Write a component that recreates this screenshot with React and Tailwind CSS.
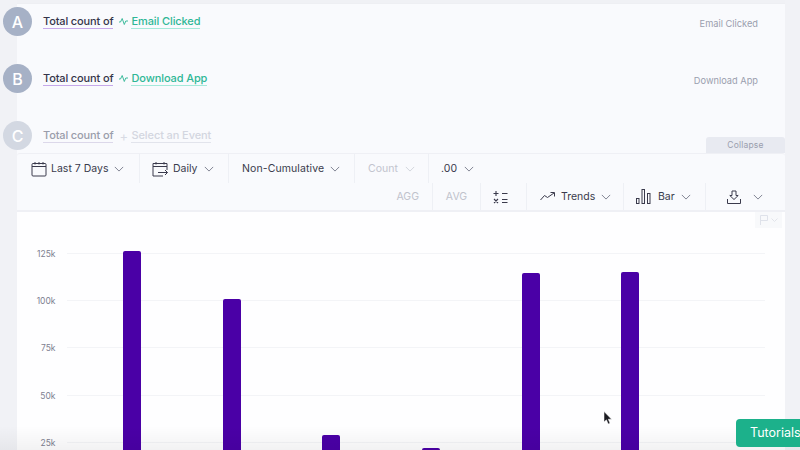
import React from "react";

const Chev = ({ className = "" }) => (
  <svg width="10" height="6" viewBox="0 0 12 7" fill="none" stroke="currentColor" strokeWidth="1.1" className={className}>
    <path d="M1 1l5 5 5-5" />
  </svg>
);

const Pulse = ({ className = "" }) => (
  <svg width="9" height="9" viewBox="0 0 9 9" fill="none" stroke="currentColor" strokeWidth="1" className={className}>
    <path d="M0 5h1.5L3.2 1.5 5.3 7.5 6.8 4H9" />
  </svg>
);

function QueryRow({ letter, event, right, dim }) {
  return (
    <div className="flex h-[57px] items-center -ml-[14px]">
      <div className={`w-[29px] h-[29px] shrink-0 rounded-full flex items-center justify-center text-white text-[16px] font-medium ${dim ? "bg-[#d3d8e2]" : "bg-[#a6b1c6]"}`}>
        {letter}
      </div>
      <span className={`ml-[11px] text-[11px] font-medium tracking-[-0.14px] leading-[14px] border-b ${dim ? "text-[#9a9dab] border-[#dcd8ea]" : "text-[#35354a] border-[#c6a8ea]"}`}>
        Total count of
      </span>
      {dim ? (
        <span className="ml-[6px] mr-[3px] w-[9px] text-[#d8dbe4] text-[13px] leading-[14px]">+</span>
      ) : (
        <Pulse className="ml-[6px] mr-[3px] text-[#3dbb9c]" />
      )}
      <span className={`text-[11px] font-medium tracking-[-0.1px] leading-[14px] border-b ${dim ? "text-[#d3d6e0] border-[#e2e4ec]" : "text-[#2fb796] border-[#a5e9da]"}`}>
        {event}
      </span>
      {right && (
        <span className="ml-auto text-[9.25px] text-[#9a9eae] mt-[5px] mr-[27px]">{right}</span>
      )}
    </div>
  );
}

const Div = ({ className = "" }) => <div className={`w-px self-stretch bg-[#eef0f5] ${className}`} />;

const Calendar = () => (
  <svg width="16" height="16" viewBox="0 0 16 16" fill="none" stroke="#3a3a4c" strokeWidth="1">
    <rect x="1" y="2.5" width="14" height="12.5" rx="1" />
    <path d="M1 5.5h14M4 1v2.5M8 1v2.5M12 1v2.5" />
  </svg>
);

const CalendarArrow = () => (
  <svg width="16" height="16" viewBox="0 0 16 16" fill="none" stroke="#3a3a4c" strokeWidth="1">
    <path d="M15 9V2.5H1V15h10M1 5.5h14M4 1v2.5M12 1v2.5M6 11.5h9.5M13 9l2.5 2.5L13 14" />
  </svg>
);

const Ops = () => (
  <svg width="15" height="14" viewBox="0 0 15 14" fill="none" stroke="#3a3a4c" strokeWidth="1.1">
    <path d="M0.5 3.5h5M3 1v5M9 3.5h5.5M1 9l4 4M5 9l-4 4M9 9.5h5.5M9 12.5h5.5" />
  </svg>
);

const TrendIcon = () => (
  <svg width="15" height="9" viewBox="0 0 15 9" fill="none" stroke="#3a3a4c" strokeWidth="1">
    <path d="M0.5 8L4.5 3.5 7.5 5.5 14 1M10.5 0.5H14.5V4.5" />
  </svg>
);

const BarIcon = () => (
  <svg width="15" height="15" viewBox="0 0 15 15" fill="none" stroke="#3a3a4c" strokeWidth="1">
    <rect x="0.5" y="9.5" width="2.5" height="5" />
    <rect x="6" y="0.5" width="2.5" height="14" />
    <rect x="11.5" y="4.5" width="2.5" height="10" />
  </svg>
);

const Download = () => (
  <svg width="14" height="14" viewBox="0 0 14 14" fill="none" stroke="#3a3a4c" strokeWidth="1">
    <path d="M5 1h4v4.5h2.2L7 9.5 2.8 5.5H5zM0.5 9v4.5h13V9" />
  </svg>
);

const Flag = () => (
  <svg width="8" height="10" viewBox="0 0 8 10" fill="none" stroke="#dfe2ea" strokeWidth="1">
    <path d="M0.5 10V0.5h7v5h-7" />
  </svg>
);

const Item = ({ children, className = "" }) => (
  <div className={`flex items-center text-[10.5px] text-[#3a3a4c] ${className}`}>{children}</div>
);

function Chart() {
  const grid = [
    [41, "125k"],
    [88, "100k"],
    [135, "75k"],
    [183, "50k"],
    [230, "25k"],
  ];
  const bars = [
    [106, 39],
    [206, 87],
    [305, 223],
    [405, 236],
    [505, 61],
    [604, 60],
  ];
  return (
    <svg width="768" height="238" viewBox="0 0 768 238" className="block">
      {grid.map(([y, t]) => (
        <g key={t}>
          <line x1="50" x2="748" y1={y + 0.5} y2={y + 0.5} stroke="#f3f4f7" />
          <text x="38.5" y={y + 4} textAnchor="end" fontSize="8.5" fill="#7d8090" fontFamily="Inter, sans-serif">
            {t}
          </text>
        </g>
      ))}
      {bars.map(([x, y]) => (
        <path key={x} d={`M${x} 240V${y + 2}a2 2 0 0 1 2-2h14a2 2 0 0 1 2 2V240z`} fill="#4a00a6" />
      ))}
    </svg>
  );
}

export default function App() {
  return (
    <div className="relative flex w-[800px] h-[450px] overflow-hidden bg-[#f0f1f5] font-['Inter',sans-serif]">
      <div className="w-[17px] shrink-0 bg-[#f1f2f6]" />
      <main className="w-[768px] shrink-0 flex flex-col bg-[#f9fafd] mt-[3px] border-t border-[#eeeff3]">
        <section className="relative h-[160px] -mt-[11px] shrink-0">
          <QueryRow letter="A" event="Email Clicked" right="Email Clicked" />
          <QueryRow letter="B" event="Download App" right="Download App" />
          <QueryRow letter="C" event="Select an Event" dim />
          <div className="absolute right-0 bottom-0 w-[79px] h-[16px] rounded-t-[3px] bg-[#e8eaf1] flex items-center justify-center text-[8.5px] tracking-[0.2px] text-[#9a9eae]">
            Collapse
          </div>
        </section>
        <section className="h-[59px] shrink-0 border-t border-b-2 border-[#eff0f5] rounded-t-[3px] flex flex-col">
          <div className="h-[29px] flex shrink-0">
            <Item className="w-[122px] pl-[14px]">
              <Calendar />
              <span className="ml-[4px]">Last 7 Days</span>
              <Chev className="ml-[6px] text-[#777a8a]" />
            </Item>
            <Div />
            <Item className="w-[88px] pl-[12px]">
              <CalendarArrow />
              <span className="ml-[5px]">Daily</span>
              <Chev className="ml-[6px] text-[#777a8a]" />
            </Item>
            <Div />
            <Item className="w-[125px] pl-[13px] tracking-[0.1px]">
              <span>Non-Cumulative</span>
              <Chev className="ml-[6px] text-[#777a8a]" />
            </Item>
            <Div />
            <Item className="w-[73px] pl-[13px] text-[#c2c4ce]">
              <span>Count</span>
              <Chev className="ml-[7px] text-[#d0d2da]" />
            </Item>
            <Div />
            <Item className="pl-[12px]">
              <span>.00</span>
              <Chev className="ml-[7px] text-[#777a8a]" />
            </Item>
          </div>
          <div className="flex-1 flex justify-end">
            <Item className="w-[40px] text-[#c0c2cc] justify-end"><span className="pr-[13px]">AGG</span></Item>
            <Div />
            <Item className="w-[47px] justify-center text-[#c0c2cc]">AVG</Item>
            <Div />
            <Item className="w-[45px] pl-[12px]"><Ops /></Item>
            <Div />
            <Item className="w-[96px] pl-[13px]">
              <TrendIcon />
              <span className="ml-[6px]">Trends</span>
              <Chev className="ml-[6px] text-[#777a8a]" />
            </Item>
            <Div />
            <Item className="w-[81px] pl-[12px]">
              <BarIcon />
              <span className="ml-[7px]">Bar</span>
              <Chev className="ml-[6px] text-[#777a8a]" />
            </Item>
            <Div />
            <Item className="w-[79px] pl-[21px]">
              <Download />
              <Chev className="ml-[12px] text-[#777a8a]" />
            </Item>
          </div>
        </section>
        <section className="relative flex-1 bg-[#fefeff]">
          <Chart />
          <div className="absolute right-[3px] top-0 w-[27px] h-[16px] bg-[#f8f9fb] flex items-center justify-center gap-[3px] text-[#e2e4ea]">
            <Flag />
            <svg width="7" height="4" viewBox="0 0 7 4" fill="none" stroke="currentColor"><path d="M0.5 0.5l3 3 3-3" /></svg>
          </div>
        </section>
      </main>
      <div className="flex-1 bg-[#f1f2f6]" />
      <div className="absolute inset-x-0 bottom-0 h-[24px] bg-gradient-to-b from-transparent to-[#0000000c] pointer-events-none" />
      <svg width="10" height="14" viewBox="0 0 10 14" className="absolute left-[603px] top-[411px]">
        <path d="M1 0.5V11L3.4 8.8 5.2 13 7 12.2 5.3 8.2H8.6z" fill="#1c1c22" stroke="#fff" strokeWidth="0.5" />
      </svg>
      <div className="absolute left-[736px] top-[419px] w-[64px] h-[28px] rounded-l-[4px] bg-[#1cb18b] flex items-center pl-[14px] text-[12.5px] text-white whitespace-nowrap">
        Tutorials
      </div>
    </div>
  );
}
